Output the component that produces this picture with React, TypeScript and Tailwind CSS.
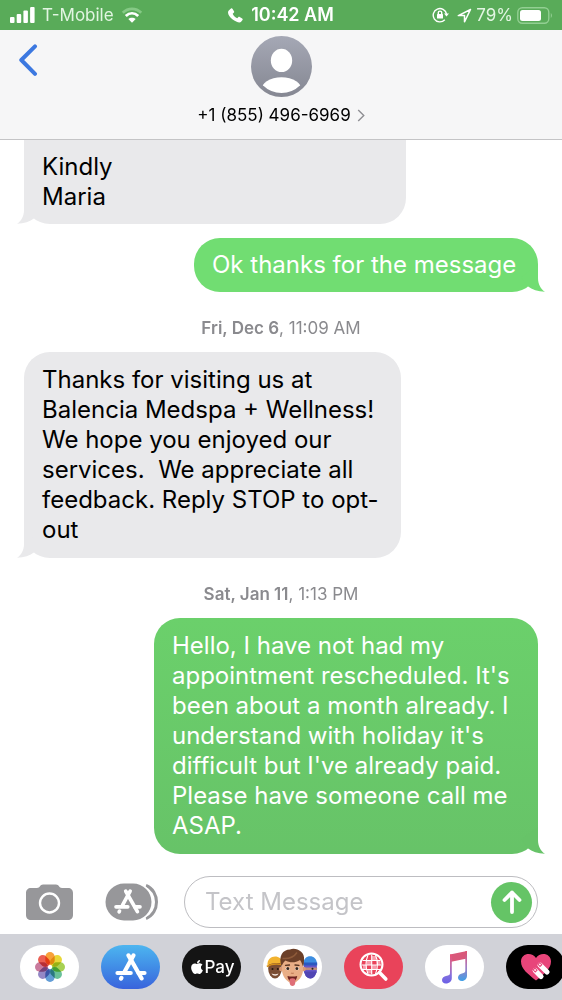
import React from 'react';
import { FaApple } from 'react-icons/fa';
import clsx from 'clsx';

interface Message {
  id: number;
  from: 'them' | 'me';
  text: string;
  shape: string;
  tail: string;
}

interface DockApp {
  name: string;
  bg: string;
  icon: React.ReactNode;
}

const messages: Record<string, Message> = {
  signature: {
    id: 1,
    from: 'them',
    text: 'Kindly\nMaria',
    shape: 'w-[382px] rounded-b-[26px] bg-[#e9e9eb] py-3',
    tail: 'text-[#e9e9eb]',
  },
  thanks: {
    id: 2,
    from: 'me',
    text: 'Ok thanks for the message',
    shape: 'w-[344px] rounded-[26px] bg-[#71dd72] py-3',
    tail: 'text-[#71dd72]',
  },
  feedback: {
    id: 3,
    from: 'them',
    text: 'Thanks for visiting us at\nBalencia Medspa + Wellness!\nWe hope you enjoyed our\nservices.  We appreciate all\nfeedback. Reply STOP to opt-\nout',
    shape: 'w-[377px] rounded-[26px] bg-[#e9e9eb] py-[13px]',
    tail: 'text-[#e9e9eb]',
  },
  reschedule: {
    id: 4,
    from: 'me',
    text: "Hello, I have not had my\nappointment rescheduled. It's\nbeen about a month already. I\nunderstand with holiday it's\ndifficult but I've already paid.\nPlease have someone call me\nASAP.",
    shape: 'w-[384px] rounded-[26px] bg-linear-to-b from-[#6bd06b] to-[#67c368] py-[13px]',
    tail: 'text-[#67c368]',
  },
};

const Bubble: React.FC<{ message: Message }> = ({ message }) => {
  const mine = message.from === 'me';
  return (
    <div className={clsx('flex px-6', mine ? 'justify-end' : 'justify-start')}>
      <div
        className={clsx(
          'relative px-[18px] text-[24px] leading-[30px] whitespace-pre',
          mine ? 'text-white' : 'text-black',
          message.shape
        )}
      >
        <p>{message.text}</p>
        <svg
          viewBox="0 0 24 27"
          className={clsx(
            'absolute bottom-0 h-[27px] w-6',
            mine ? '-right-[7px] -scale-x-100' : '-left-[7px]',
            message.tail
          )}
          aria-hidden="true"
        >
          <path d="M7 0V13C7 19 4.500 24 0 26.800C7 26.600 13 24.500 17.200 21.200L24 12Z" fill="currentColor" />
        </svg>
      </div>
    </div>
  );
};

const DateLabel: React.FC<{ day: string; time: string }> = ({ day, time }) => (
  <div className="flex h-[60px] items-center justify-center pt-3 text-[17px] leading-5 text-[#8a8a8e]">
    <p>
      <span className="font-semibold">{day}</span>, {time}
    </p>
  </div>
);

const AppStoreStrokes = () => (
  <g stroke="#fff" strokeWidth="4" strokeLinecap="round" fill="none">
    <path d="M17.600 2.300L9.300 17.500" />
    <path d="M12.800 2.300L25.500 24.500" />
    <path d="M2.200 19.300H15M22.500 19.300H28.300" />
    <path d="M6 24L5.600 24.700" />
  </g>
);

const PhotosIcon = () => {
  const petals = ['#f7941d', '#e6d21c', '#9ccb3b', '#55b98b', '#4d8fd1', '#8577bd', '#c2688f', '#e8493c'];
  return (
    <svg viewBox="-16 -16 32 32" className="size-8" aria-hidden="true">
      {petals.map((color, i) => (
        <rect
          key={color}
          x="-4.700"
          y="-15"
          width="9.400"
          height="13"
          rx="4.700"
          fill={color}
          opacity="0.880"
          transform={`rotate(${i * 45})`}
          className="mix-blend-multiply"
        />
      ))}
      <circle r="1.200" fill="#fff" />
    </svg>
  );
};

const MemojiIcon = () => (
  <svg viewBox="0 0 59 44" className="h-11 w-[59px]" aria-hidden="true">
    {/* left friend */}
    <ellipse cx="12" cy="23.500" rx="6.800" ry="10" fill="#7a4c32" />
    <path d="M4.500 20.500C3.500 9 19 8.500 19.500 18.500C14 17.500 9 18 4.500 20.500Z" fill="#f2b330" />
    <path d="M3.800 21.500C8 19 14 18.500 19 19.500" stroke="#d48d1c" strokeWidth="1.500" fill="none" />
    <circle cx="9.500" cy="24" r="1" fill="#22150f" />
    <circle cx="14.800" cy="24" r="1" fill="#22150f" />
    <path d="M8.500 28.500C11 29.500 13.500 29.500 15.500 28.500C14.500 31.500 10 31.500 8.500 28.500Z" fill="#f3e6de" />
    {/* right friend */}
    <ellipse cx="47.300" cy="23.500" rx="6.800" ry="10" fill="#6656c8" />
    <path d="M40.500 19C40 8.500 54 8.500 54 19Z" fill="#3d8de0" />
    <path d="M40.500 17.500H54.200V20.500H40.500Z" fill="#2a58c0" />
    <path d="M41 22.500H54V25H41Z" fill="#c08a7c" />
    <circle cx="49.500" cy="23.700" r="1" fill="#222" />
    <path d="M41 26.500H54L51.500 31.500C49 34 46 34 43 31.500Z" fill="#5146b4" />
    {/* front face */}
    <circle cx="18.300" cy="24" r="2.300" fill="#d99873" />
    <circle cx="40.500" cy="24" r="2.300" fill="#d99873" />
    <path d="M19 18C19 9 40 9 40 18V25C40 31 35 37.500 29.300 38.500C24 37.500 19 31 19 25Z" fill="#e9ae86" />
    <path d="M18.500 21C15 11 20 4.500 27 4.500C32 2 42.500 6 41 15C41 18 40.700 20 40 21.500C39 19 38.500 17 37 15C32 18.500 26 17.500 22.500 15.500C20.500 17 19.800 19 18.500 21Z" fill="#6b3f28" />
    <path d="M19.500 13.500C25 14 31 12 34 7.500" stroke="#8d5a3a" strokeWidth="1.500" fill="none" />
    <path d="M22.500 20.300L26.500 20M32 20L36 20.300" stroke="#54311f" strokeWidth="1.300" strokeLinecap="round" />
    <ellipse cx="24.700" cy="23.600" rx="2" ry="1.700" fill="#fff" />
    <ellipse cx="34" cy="23.600" rx="2" ry="1.700" fill="#fff" />
    <circle cx="24.800" cy="23.600" r="1.500" fill="#35231a" />
    <circle cx="33.900" cy="23.600" r="1.500" fill="#35231a" />
    <path d="M28 27.800C28.800 28.600 30 28.600 30.800 27.800" stroke="#c37f5b" strokeWidth="1.200" fill="none" />
    <path d="M24.500 31C27.500 31.800 31.500 31.800 34.200 31C33.500 35 32 36.500 29.400 36.500C27 36.500 25 35 24.500 31Z" fill="#6d2320" />
    <path d="M26.700 34C28 33 31 33 32.200 34V38C32.200 42 26.700 42 26.700 38Z" fill="#df6f78" />
  </svg>
);

const ImagesIcon = () => (
  <svg viewBox="0 0 30 30" className="size-[30px]" fill="none" stroke="#fff" aria-hidden="true">
    <circle cx="12.500" cy="12.500" r="11" strokeWidth="2" />
    <path d="M8 8.500H13V13H8ZM13 13H17.500V17.500H13ZM4 13H8V17H4ZM13 4H17V8.500H13ZM17.500 8.500H21.500V13H17.500ZM8 17.500H13V21.500H9Z" fill="#f79aa9" stroke="none" />
    <path d="M3.500 8.500H21.500M2.500 13H22.500M3.500 17.500H21.500M12.700 2.500V22.500M9 3C6.500 9 6.500 16 9 22M16.500 3C19 9 19 16 16.500 22" strokeWidth="1.100" />
    <path d="M20.500 20.500L26.800 27" strokeWidth="3.600" strokeLinecap="round" />
  </svg>
);

const MusicIcon = () => (
  <svg viewBox="0 0 28 34" className="h-[34px] w-7" aria-hidden="true">
    <defs>
      <linearGradient id="note" x1="0" y1="0" x2="0" y2="1">
        <stop offset="0" stopColor="#ec5173" />
        <stop offset="0.350" stopColor="#c46aa8" />
        <stop offset="0.750" stopColor="#7f6fe0" />
        <stop offset="1" stopColor="#6b5fe6" />
      </linearGradient>
      <linearGradient id="noteRight" x1="0" y1="0" x2="0" y2="1">
        <stop offset="0" stopColor="#e0506c" />
        <stop offset="0.500" stopColor="#a879c0" />
        <stop offset="1" stopColor="#3fa0e8" />
      </linearGradient>
    </defs>
    <path d="M9 4.500L26 1V8.500L9 12Z" fill="#d9587a" />
    <path d="M9 4.500H10.800V28C10.800 32 7.500 33.500 4.800 33.500C2.500 33.500 1 32 1 30C1 27.500 3 26.500 5 26C8 25.400 9 25 9 23Z" fill="url(#note)" />
    <path d="M24.300 1.300L26 1V25.500C26 29.500 23 31 20.800 31C18.500 31 17 29.500 17 27.500C17 25 19 24 21 23.500C23.500 23 24.300 22.500 24.300 20.500Z" fill="url(#noteRight)" />
  </svg>
);

const TouchIcon = () => (
  <svg viewBox="0 0 32 30" className="h-[30px] w-8" aria-hidden="true">
    <path d="M16 28.500C8 22 1 17 1 9.500C1 1 12 -0.500 16 6C20 -0.500 31 1 31 9.500C31 17 24 22 16 28.500Z" fill="#e8457a" />
    <g stroke="#fff" strokeWidth="5.200" strokeLinecap="round">
      <path d="M15.200 18.500L21 24.500" />
      <path d="M20 13L27 20" />
    </g>
    <g stroke="#e8457a" strokeWidth="1.100" fill="none">
      <path d="M13.200 17.800L15 16L17 18.200L15.200 20ZM18 12.300L19.800 10.500L21.800 12.700L20 14.500Z" />
    </g>
  </svg>
);

const dockApps: DockApp[] = [
  { name: 'Photos', bg: 'bg-white', icon: <PhotosIcon /> },
  {
    name: 'App Store',
    bg: 'bg-linear-to-b from-[#4db5ef] to-[#3a63dc]',
    icon: (
      <svg viewBox="0 0 30.500 27" className="h-7 w-8" aria-hidden="true">
        <AppStoreStrokes />
      </svg>
    ),
  },
  {
    name: 'Apple Pay',
    bg: 'bg-[#141414]',
    icon: (
      <span className="flex items-center text-[17px] leading-5 font-medium text-white">
        <FaApple className="size-4" />
        Pay
      </span>
    ),
  },
  { name: 'Memoji', bg: 'bg-white', icon: <MemojiIcon /> },
  { name: 'Images', bg: 'bg-[#e9435a]', icon: <ImagesIcon /> },
  { name: 'Music', bg: 'bg-white', icon: <MusicIcon /> },
  { name: 'Digital Touch', bg: 'bg-black', icon: <TouchIcon /> },
];

const StatusBar = () => (
  <div className="grid h-[30px] grid-cols-3 items-center bg-[#59ab59] text-[17px] leading-5 text-[#e2f5e2]">
    <div className="flex items-center gap-[7px] pl-[10px]">
      <svg viewBox="0 0 25 16" className="h-4 w-[25px]" fill="#fff" aria-hidden="true">
        <rect x="0" y="10" width="4.500" height="6" rx="1" />
        <rect x="6.700" y="7" width="4.500" height="9" rx="1" />
        <rect x="13.400" y="3.500" width="4.500" height="12.500" rx="1" />
        <rect x="20.100" y="0" width="4.500" height="16" rx="1" />
      </svg>
      <span>T-Mobile</span>
      <svg viewBox="0 0 22 16" className="h-4 w-[22px]" fill="none" aria-hidden="true">
        <path d="M1.800 5.800C7 0.500 15 0.500 20.200 5.800" stroke="#85c985" strokeWidth="2.800" />
        <path d="M4.800 9C8.500 5.500 13.500 5.500 17.200 9" stroke="#fff" strokeWidth="2.800" />
        <path d="M11 15.800L7.300 12.100C9.300 10.300 12.700 10.300 14.700 12.100Z" fill="#fff" />
      </svg>
    </div>
    <div className="flex items-center justify-center gap-2 text-[18px] font-semibold text-white">
      <svg viewBox="0 0 15 15" className="size-[15px]" fill="#fff" aria-hidden="true">
        <path d="M1 2.300L3 0.600C3.600 0.200 4.200 0.300 4.600 0.900L6 3.300C6.300 3.900 6.200 4.400 5.700 4.800L4.700 5.700C5.500 7.600 7.300 9.400 9.300 10.300L10.200 9.300C10.600 8.800 11.200 8.700 11.700 9L14.200 10.500C14.800 10.900 14.900 11.500 14.500 12L12.900 14C10.500 16 0 10 0 4.500C0 3.600 0.300 2.800 1 2.300Z" />
      </svg>
      <span>10:42 AM</span>
    </div>
    <div className="flex items-center justify-end gap-1 pr-[9px]">
      <svg viewBox="0 0 17 16" className="mr-1 h-4 w-[17px]" fill="none" stroke="#fff" strokeWidth="1.400" aria-hidden="true">
        <path d="M12.800 12.800A6.700 6.700 0 1 1 14.500 7" />
        <path d="M12 6.500H17L14.500 9.500Z" fill="#fff" stroke="none" />
        <rect x="5" y="7" width="6" height="4.500" rx="0.500" fill="#fff" stroke="none" />
        <path d="M6.300 7V5.600C6.300 3.600 9.700 3.600 9.700 5.600V7" />
      </svg>
      <svg viewBox="0 0 15 15" className="size-[15px]" fill="none" stroke="#fff" strokeWidth="1.500" strokeLinejoin="round" aria-hidden="true">
        <path d="M13.500 1.500L1.300 7.600H7.500V13.800Z" />
      </svg>
      <span>79%</span>
      <svg viewBox="0 0 36 17" className="h-[17px] w-9" fill="none" aria-hidden="true">
        <rect x="0.800" y="0.800" width="31" height="15.400" rx="4.500" stroke="#92cf92" strokeWidth="1.400" />
        <rect x="3" y="3" width="21" height="11" rx="2.500" fill="#fff" />
        <path d="M33.800 6C35.300 6.800 35.300 10.200 33.800 11Z" fill="#92cf92" />
      </svg>
    </div>
  </div>
);

const ContactHeader = () => (
  <header className="grid h-[110px] grid-cols-[1fr_auto_1fr] items-start border-b border-[#c4c4c6] bg-[#f6f6f7]">
    <button type="button" aria-label="Back" className="mt-[14px] ml-[18px] justify-self-start text-[#3c78e0]">
      <svg viewBox="0 0 20 32" className="h-8 w-5" fill="none" stroke="currentColor" strokeWidth="4" strokeLinecap="round" strokeLinejoin="round" aria-hidden="true">
        <path d="M17 2.300L3.300 16L17 29.800" />
      </svg>
    </button>
    <button type="button" className="flex flex-col items-center gap-[7px] pt-[6px]">
      <svg viewBox="0 0 60 60" className="size-[61px]" aria-hidden="true">
        <defs>
          <linearGradient id="avatar" x1="0" y1="0" x2="0" y2="1">
            <stop offset="0" stopColor="#a5a8b5" />
            <stop offset="1" stopColor="#858792" />
          </linearGradient>
          <clipPath id="disc">
            <circle cx="30" cy="30" r="26" />
          </clipPath>
        </defs>
        <circle cx="30" cy="30" r="30" fill="url(#avatar)" />
        <ellipse cx="30" cy="24" rx="10.500" ry="11.500" fill="#fff" />
        <ellipse cx="30" cy="54" rx="20.500" ry="13.500" fill="#fff" clipPath="url(#disc)" />
      </svg>
      <span className="flex items-center gap-[6px] text-[17px] leading-[22px] text-black">
        +1 (855) 496-6969
        <svg viewBox="0 0 8 14" className="h-[13px] w-2" fill="none" stroke="#8e8e93" strokeWidth="1.500" aria-hidden="true">
          <path d="M1 1L7 7L1 13" />
        </svg>
      </span>
    </button>
  </header>
);

const Composer = () => (
  <form className="mt-auto flex items-center px-6 pb-[6px]" onSubmit={e => e.preventDefault()}>
    <button type="button" aria-label="Camera" className="ml-[2px]">
      <svg viewBox="0 0 47 36" className="h-9 w-[47px]" aria-hidden="true">
        <path d="M5 4H11C14 4 14 0.500 17 0.500H30C33 0.500 33 4 36 4H42C45 4 47 6 47 9V31C47 34 45 36 42 36H5C2 36 0 34 0 31V9C0 6 2 4 5 4Z" fill="#97979a" />
        <circle cx="23.500" cy="19" r="9.500" stroke="#fff" strokeWidth="2.400" fill="none" />
      </svg>
    </button>
    <button type="button" aria-label="Apps" className="ml-8">
      <svg viewBox="0 0 54 38" className="h-[38px] w-[54px]" aria-hidden="true">
        <path d="M41 2.500C55 8 55 30 41 35.500" stroke="#97979a" strokeWidth="3" fill="none" />
        <rect x="-1" y="-0.500" width="49.500" height="39" rx="19.500" fill="#fff" />
        <rect x="0.500" y="0.500" width="46" height="37" rx="18.500" fill="#97979a" />
        <svg x="9" y="5.500" width="28" height="26" viewBox="0 0 30.500 27">
          <AppStoreStrokes />
        </svg>
      </svg>
    </button>
    <div className="ml-[25px] flex h-[52px] min-w-0 flex-1 items-center rounded-full border border-[#bdbdc1] bg-white pr-[5px] pl-5">
      <input
        type="text"
        aria-label="Text Message"
        placeholder="Text Message"
        className="min-w-0 flex-1 bg-transparent text-[24px] leading-[30px] outline-none placeholder:text-[#c4c4c8]"
      />
      <button type="submit" aria-label="Send" className="flex size-[41px] items-center justify-center rounded-full bg-[#65c466]">
        <svg viewBox="0 0 20 24" className="h-6 w-5" fill="none" stroke="#fff" strokeWidth="3.800" strokeLinecap="round" strokeLinejoin="round" aria-hidden="true">
          <path d="M10 22V2.500M2.500 10L10 2.500L17.500 10" />
        </svg>
      </button>
    </div>
  </form>
);

const App: React.FC = () => (
  <div className="flex min-h-screen flex-col overflow-hidden bg-white font-['Inter','Liberation_Sans',sans-serif]">
    <StatusBar />
    <ContactHeader />

    <main>
      <Bubble message={messages.signature} />
      <div className="h-[14px]" />
      <Bubble message={messages.thanks} />
      <DateLabel day="Fri, Dec 6" time="11:09 AM" />
      <Bubble message={messages.feedback} />
      <DateLabel day="Sat, Jan 11" time="1:13 PM" />
      <Bubble message={messages.reschedule} />
    </main>

    <Composer />

    {/* App drawer */}
    <nav className="flex h-[66px] items-center gap-[22px] overflow-hidden bg-[#d1d2d8] pl-5">
      {dockApps.map(app => (
        <button
          key={app.name}
          type="button"
          aria-label={app.name}
          className={clsx('flex h-11 w-[59px] shrink-0 items-center justify-center overflow-hidden rounded-[22px]', app.bg)}
        >
          {app.icon}
        </button>
      ))}
    </nav>
  </div>
);

export default App;
